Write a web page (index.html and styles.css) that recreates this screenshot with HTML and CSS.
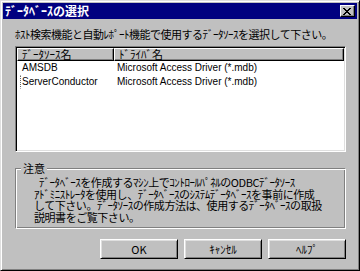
FILE: index.html
```html
<!DOCTYPE html>
<html lang="ja">
<head>
    <meta charset="UTF-8">
    <title>ﾃﾞｰﾀﾍﾞｰｽの選択</title>
    <link rel="stylesheet" href="styles.css">
</head>
<body>
    <div class="window">
        <div class="titlebar">
            <span class="title">ﾃﾞｰﾀﾍﾞｰｽの選択</span>
            <button class="close" type="button">
                <svg width="8" height="7" viewBox="0 0 8 7" shape-rendering="crispEdges">
                    <path d="M0 0h2v1H0zM6 0h2v1H6zM1 1h2v1H1zM5 1h2v1H5zM2 2h4v1H2zM3 3h2v1H3zM2 4h4v1H2zM1 5h2v1H1zM5 5h2v1H5zM0 6h2v1H0zM6 6h2v1H6z" fill="#000"/>
                </svg>
            </button>
        </div>

        <div class="content">
            <p class="prompt">ﾎｽﾄ検索機能と自動ﾚﾎﾟｰﾄ機能で使用するﾃﾞｰﾀｿｰｽを選択して下さい。</p>

            <div class="listview">
                <div class="lv-head">
                    <div class="lv-col col-name">ﾃﾞｰﾀｿｰｽ名</div>
                    <div class="lv-col col-driver">ﾄﾞﾗｲﾊﾞ名</div>
                </div>
                <div class="lv-row">
                    <span class="cell col-name"><span class="label">AMSDB</span></span>
                    <span class="cell">Microsoft Access Driver (*.mdb)</span>
                </div>
                <div class="lv-row">
                    <span class="cell col-name"><span class="label focused">ServerConductor</span></span>
                    <span class="cell">Microsoft Access Driver (*.mdb)</span>
                </div>
            </div>

            <div class="group">
                <span class="group-label">注意</span>
                <p class="note"><span class="first">ﾃﾞｰﾀﾍﾞｰｽを作成するﾏｼﾝ上でｺﾝﾄﾛｰﾙﾊﾟﾈﾙのODBCﾃﾞｰﾀｿｰｽ</span><br>ｱﾄﾞﾐﾆｽﾄﾚｰﾀを使用し、ﾃﾞｰﾀﾍﾞｰｽのｼｽﾃﾑﾃﾞｰﾀﾍﾞｰｽを事前に作成<br>して下さい。ﾃﾞｰﾀｿｰｽの作成方法は、使用するﾃﾞｰﾀﾍﾞｰｽの取扱<br>説明書をご覧下さい。</p>
            </div>

            <div class="buttons">
                <button class="btn" type="button">OK</button>
                <button class="btn" type="button">ｷｬﾝｾﾙ</button>
                <button class="btn" type="button">ﾍﾙﾌﾟ</button>
            </div>
        </div>
    </div>
</body>
</html>
```
FILE: styles.css
```css
body {
    margin: 0;
    background: #c0c0c0;
    font-family: "Noto Sans CJK JP", sans-serif;
    font-size: 11px;
    color: #000;
}
.window {
    box-sizing: border-box;
    width: 360px;
    height: 271px;
    background: #c0c0c0;
    border: 1px solid;
    border-color: #dfdfdf #000 #000 #dfdfdf;
    box-shadow: inset 1px 1px #fff, inset -1px -1px #808080;
    padding: 2px;
    display: flex;
    flex-direction: column;
}
.titlebar {
    height: 16px;
    background: #000080;
    color: #fff;
    display: flex;
    align-items: center;
    justify-content: space-between;
    padding-left: 2px;
}
.title {
    font-weight: bold;
    font-size: 12px;
    line-height: 16px;
}
.close {
    width: 15px;
    height: 12px;
    margin-right: 2px;
    padding: 0;
    background: #c0c0c0;
    border: 1px solid;
    border-color: #fff #000 #000 #fff;
    box-shadow: inset -1px -1px #808080;
    display: flex;
    align-items: center;
    justify-content: center;
}
.close svg {
    display: block;
    margin-left: -1px;
}
.content {
    padding: 0 11px 0 12px;
    display: flex;
    flex-direction: column;
}
.prompt {
    margin: 8px 0 0 0;
    line-height: 14px;
    white-space: nowrap;
    letter-spacing: -0.5px;
}
.listview {
    margin-top: 5px;
    height: 106px;
    box-sizing: border-box;
    background: #fff;
    border: 1px solid;
    border-color: #808080 #fff #fff #808080;
    box-shadow: inset 1px 1px #000, inset -1px -1px #dfdfdf;
    padding: 1px;
}
.lv-head {
    display: flex;
    height: 13px;
}
.lv-col {
    box-sizing: border-box;
    background: #c0c0c0;
    border: 1px solid;
    border-color: #fff #000 #000 #fff;
    box-shadow: inset -1px -1px #808080;
    line-height: 11px;
    padding-left: 4px;
    white-space: nowrap;
}
.col-name {
    width: 97px;
    flex: none;
}
.col-driver {
    flex: 1;
}
.lv-row {
    display: flex;
    height: 14px;
    align-items: center;
    font-family: "Liberation Sans", sans-serif;
    font-size: 10px;
}
.cell {
    white-space: nowrap;
    line-height: 12px;
}
.cell.col-name {
    padding-left: 3px;
    box-sizing: border-box;
}
.cell:last-child {
    padding-left: 3px;
}
.label {
    display: inline-block;
    padding: 0 1px;
    border: 1px solid transparent;
}
.label.focused {
    border-left: 1px dotted #666;
}
.group {
    margin-top: 16px;
    height: 61px;
    box-sizing: border-box;
    padding: 0 4px 0 18px;
    border: 1px solid;
    border-color: #808080 #fff #fff #808080;
    box-shadow: inset 1px 1px #fff, inset -1px -1px #808080;
}
.group-label {
    display: block;
    width: fit-content;
    margin: -7px 0 0 -13px;
    padding: 0 2px;
    background: #c0c0c0;
    line-height: 12px;
}
.note {
    margin: 3px 0 0 0;
    line-height: 11.5px;
    white-space: nowrap;
    letter-spacing: -0.45px;
}
.note .first {
    margin-left: 5px;
}
.buttons {
    margin-top: 10px;
    display: flex;
    justify-content: flex-end;
    gap: 6px;
}
.btn {
    width: 78px;
    height: 20px;
    padding: 0;
    font-family: "Noto Sans CJK JP", sans-serif;
    font-size: 11px;
    background: #c0c0c0;
    border: 1px solid;
    border-color: #fff #000 #000 #fff;
    box-shadow: inset 1px 1px #dfdfdf, inset -1px -1px #808080;
    color: #000;
}
```
